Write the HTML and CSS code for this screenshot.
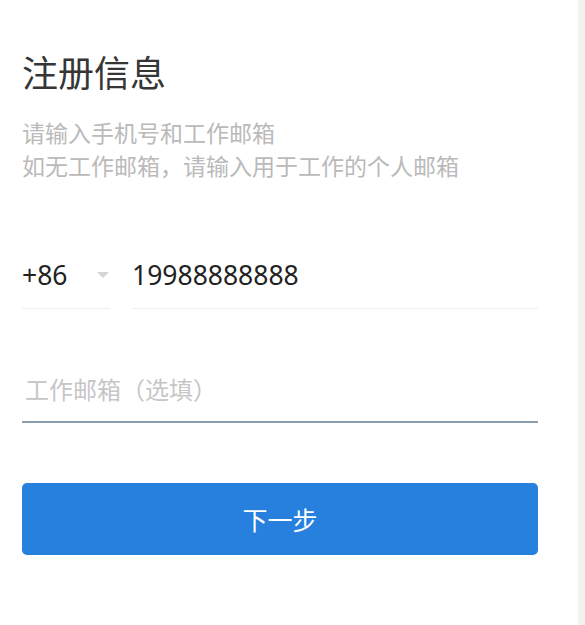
FILE: index.html
```html
<!DOCTYPE html>
<html lang="zh-CN">
<head>
<meta charset="utf-8">
<title>注册信息</title>
<link rel="stylesheet" href="styles.css">
</head>
<body>
<div class="page">
  <main class="content">
    <h1 class="title">注册信息</h1>
    <p class="sub">请输入手机号和工作邮箱<br>如无工作邮箱，请输入用于工作的个人邮箱</p>
    <div class="phone-row">
      <div class="code">
        <span class="code-text">+86</span>
        <span class="caret"></span>
      </div>
      <div class="number">19988888888</div>
    </div>
    <div class="email">工作邮箱（选填）</div>
    <button class="next">下一步</button>
  </main>
  <div class="strip"></div>
</div>
</body>
</html>
```
FILE: styles.css
```css
html, body {
  margin: 0;
  padding: 0;
  background: #ffffff;
}
body {
  font-family: "Noto Sans", "Noto Sans CJK SC", sans-serif;
}
.page {
  display: flex;
  width: 585px;
  height: 625px;
  overflow: hidden;
}
.content {
  width: 516px;
  padding-left: 22px;
  padding-right: 40px;
  display: flex;
  flex-direction: column;
}
.strip {
  width: 7px;
  background: #f2f2f2;
}
.title {
  margin: 51px 0 0;
  font-family: "Noto Sans CJK SC", sans-serif;
  font-size: 36px;
  font-weight: 400;
  line-height: 40px;
  color: #363636;
}
.sub {
  margin: 25px 0 0;
  font-family: "Noto Sans CJK SC", sans-serif;
  font-size: 23px;
  line-height: 33px;
  color: #bababa;
}
.phone-row {
  margin-top: 60px;
  display: flex;
  gap: 22px;
}
.code, .number {
  height: 66px;
  display: flex;
  align-items: center;
  border-bottom: 1px solid #eeeeee;
  font-size: 26.5px;
  color: #222222;
}
.code {
  width: 88px;
}
.code-text {
  width: 75px;
}
.caret {
  width: 0;
  height: 0;
  border-left: 6px solid transparent;
  border-right: 6px solid transparent;
  border-top: 6px solid #d4d4d4;
}
.number {
  flex: 1;
}
.email {
  margin-top: 46px;
  height: 66px;
  padding-left: 3px;
  display: flex;
  align-items: center;
  border-bottom: 2px solid #86a0ad;
  font-family: "Noto Sans CJK SC", sans-serif;
  font-size: 24px;
  color: #c6c6c6;
}
.next {
  margin-top: 60px;
  height: 72px;
  border: none;
  border-radius: 5px;
  background: #277fde;
  color: #ffffff;
  font-family: "Noto Sans CJK SC", sans-serif;
  font-size: 25px;
  padding: 0;
}
```
